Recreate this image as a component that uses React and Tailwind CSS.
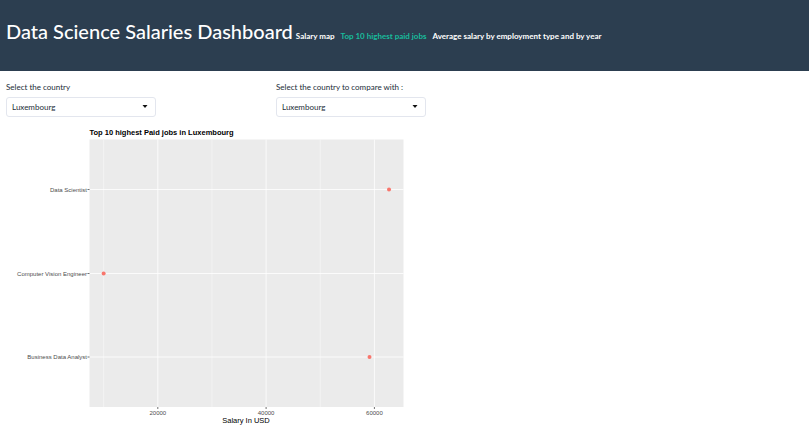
import React from "react";

const tabs = [
  { label: "Salary map", active: false },
  { label: "Top 10 highest paid jobs", active: true },
  { label: "Average salary by employment type and by year", active: false },
];

const jobs = [
  { title: "Data Scientist", salary: 62700, y: 127 },
  { title: "Computer Vision Engineer", salary: 10000, y: 295 },
  { title: "Business Data Analyst", salary: 59100, y: 462 },
];

const majorTicks = [20000, 40000, 60000];
const minorTicks = [10000, 30000, 50000];
const panel = { left: 179, right: 807, top: 27, bottom: 562 };
const scaleX = (salary) => 99 + salary * 0.01083;

function CountrySelect({ id, label }) {
  return (
    <div className="flex flex-col px-1.5">
      <label htmlFor={id} className="mb-1 text-[8px] leading-3">
        {label}
      </label>
      <div className="relative w-[150px]">
        <select
          id={id}
          defaultValue="Luxembourg"
          className="block h-5 w-full appearance-none rounded-[3px] border border-[#e3e6ee] bg-white px-[5px] text-[8px] leading-4 text-[#222d38]"
        >
          <option>Luxembourg</option>
        </select>
        <svg
          aria-hidden="true"
          viewBox="0 0 6 3"
          className="pointer-events-none absolute top-2 right-2 h-[3px] w-1.5"
        >
          <path d="M0.5 0h5L3 3z" fill="#111" />
        </svg>
      </div>
    </div>
  );
}

function SalaryChart() {
  return (
    <svg
      viewBox="0 0 810 602"
      role="img"
      aria-label="Top 10 highest Paid jobs in Luxembourg"
      className="block w-1/2 font-['Liberation_Sans',Arial,sans-serif]"
    >
      <text x="179" y="18" fontSize="15" fontWeight="700" fill="#000">
        Top 10 highest Paid jobs in Luxembourg
      </text>
      <rect
        x={panel.left}
        y={panel.top}
        width={panel.right - panel.left}
        height={panel.bottom - panel.top}
        fill="#ebebeb"
      />
      {minorTicks.map((t) => (
        <line key={t} x1={scaleX(t)} x2={scaleX(t)} y1={panel.top} y2={panel.bottom} stroke="#fff" strokeWidth="0.8" />
      ))}
      {majorTicks.map((t) => (
        <g key={t}>
          <line x1={scaleX(t)} x2={scaleX(t)} y1={panel.top} y2={panel.bottom} stroke="#fff" strokeWidth="1.6" />
          <line x1={scaleX(t)} x2={scaleX(t)} y1={panel.bottom} y2={panel.bottom + 4} stroke="#333" strokeWidth="1.4" />
          <text x={scaleX(t)} y="577" fontSize="12" textAnchor="middle" fill="#4d4d4d">
            {t}
          </text>
        </g>
      ))}
      {jobs.map((job) => (
        <g key={job.title}>
          <line x1={panel.left} x2={panel.right} y1={job.y} y2={job.y} stroke="#fff" strokeWidth="1.6" />
          <line x1="175" x2={panel.left} y1={job.y} y2={job.y} stroke="#333" strokeWidth="1.4" />
          <text x="174" y={job.y + 4} fontSize="12" textAnchor="end" fill="#4d4d4d">
            {job.title}
          </text>
          <circle cx={scaleX(job.salary)} cy={job.y} r="4" fill="#f8766d" />
        </g>
      ))}
      <text x="492" y="594" fontSize="15" textAnchor="middle" fill="#000">
        Salary In USD
      </text>
    </svg>
  );
}

export default function App() {
  return (
    <div className="bg-white font-['Lato',sans-serif] text-[#2c3e50]">
      <header className="mr-px flex items-baseline gap-[3px] bg-[#2c3e50] px-1.5 pt-[19px] pb-[27px] text-white">
        <h1 className="text-[20px] leading-[25px] font-medium whitespace-nowrap">
          Data Science Salaries Dashboard
        </h1>
        <nav className="flex gap-1.5 text-[8px] leading-3 font-bold whitespace-nowrap">
          {tabs.map((tab) => (
            <a
              key={tab.label}
              href="#"
              aria-current={tab.active ? "page" : undefined}
              className={tab.active ? "text-[#18bc9c]" : "text-white"}
            >
              {tab.label}
            </a>
          ))}
        </nav>
      </header>
      <main>
        <div className="grid grid-cols-3 pt-2.5 pb-[9px] text-[#222d38]">
          <CountrySelect id="country" label="Select the country" />
          <CountrySelect id="compare" label="Select the country to compare with :" />
        </div>
        <SalaryChart />
      </main>
    </div>
  );
}
